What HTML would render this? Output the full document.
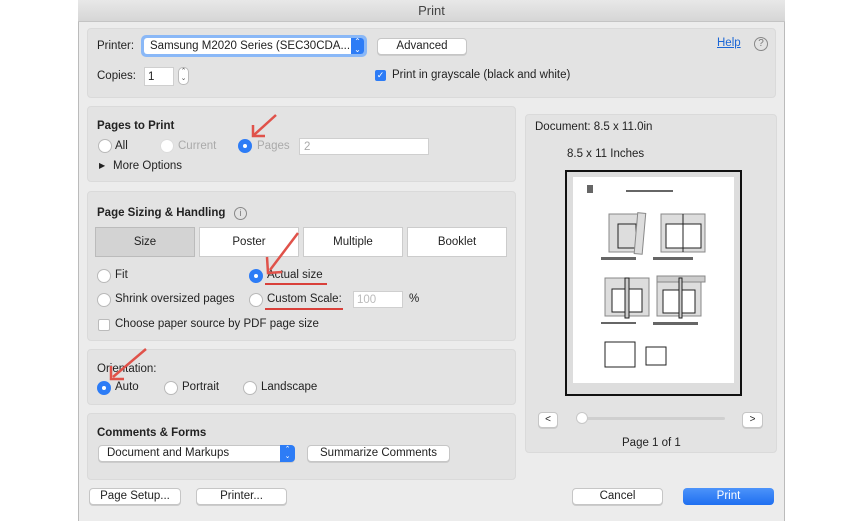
<!DOCTYPE html>
<html><head><meta charset="utf-8"><style>
*{box-sizing:border-box;margin:0;padding:0}
body{width:864px;height:521px;background:#fff;font-family:"Liberation Sans",sans-serif;font-size:11.5px;color:#222;position:relative;overflow:hidden}
.a{position:absolute}
.win{left:78px;top:0;width:707px;height:521px;background:#ececec;border-left:1px solid #bbb;border-right:1px solid #bbb}
.title{left:78px;top:0;width:707px;height:22px;background:linear-gradient(#e8e8e8,#d6d6d6);border-bottom:1px solid #c4c4c4;text-align:center;line-height:22px;font-size:13px;color:#444}
.panel{background:#e3e3e3;border:1px solid #dadada;border-radius:4px}
.btn{background:#fff;border:1px solid #c6c6c6;border-radius:4px;text-align:center;box-shadow:0 1px 0 #ccc;font-size:11.5px}
.rad{width:14px;height:14px;border-radius:50%;background:#fff;border:1px solid #b9b9b9}
.rad.on{background:#2d7cf6;border-color:#2d7cf6}
.rad.on::after{content:"";position:absolute;left:4px;top:4px;width:4px;height:4px;border-radius:50%;background:#fff}
.dis{color:#aaa}
.b{font-weight:bold}
.field{background:#fff;border:1px solid #cfcfcf}
.red{background:#d9403a;height:2px}
</style></head><body>
<div class="a win"></div>
<div class="a title">Print</div>

<div class="a panel" style="left:87px;top:28px;width:689px;height:70px"></div>
<div class="a" style="left:97px;top:40px">Printer:</div>
<div class="a" style="left:141px;top:35px;width:226px;height:22px;border-radius:5px;background:#8ab8f7"></div>
<div class="a" style="left:144px;top:38px;width:220px;height:16px;background:#fff;border-radius:3px;padding-left:6px;line-height:16px;font-size:11.5px">Samsung M2020 Series (SEC30CDA...</div>
<div class="a" style="left:351px;top:38px;width:13px;height:16px;background:#2d7cf6;border-radius:0 3px 3px 0;color:#fff;font-size:8px;text-align:center;line-height:8px">⌃<br>⌄</div>
<div class="a btn" style="left:377px;top:38px;width:90px;height:17px;line-height:15px">Advanced</div>
<div class="a" style="left:717px;top:37px;color:#1a66d6;text-decoration:underline">Help</div>
<div class="a" style="left:754px;top:37px;width:14px;height:14px;border:1px solid #888;border-radius:50%;font-size:10px;text-align:center;line-height:12px;color:#777">?</div>
<div class="a" style="left:97px;top:70px">Copies:</div>
<div class="a field" style="left:144px;top:67px;width:30px;height:19px;padding:3px 3px">1</div>
<div class="a" style="left:178px;top:67px;width:11px;height:18px;border:1px solid #bbb;border-radius:5px;background:#fff;font-size:7px;line-height:7px;text-align:center;color:#555">⌃<br>⌄</div>
<div class="a" style="left:375px;top:70px;width:11px;height:11px;background:#2d7cf6;border-radius:2px;color:#fff;font-size:9px;line-height:11px;text-align:center">✓</div>
<div class="a" style="left:392px;top:69px">Print in grayscale (black and white)</div>

<div class="a panel" style="left:87px;top:106px;width:429px;height:76px"></div>
<div class="a b" style="left:97px;top:120px">Pages to Print</div>
<div class="a rad" style="left:98px;top:139px"></div><div class="a" style="left:115px;top:140px">All</div>
<div class="a rad" style="left:160px;top:139px;border-color:#ddd"></div><div class="a dis" style="left:178px;top:140px">Current</div>
<div class="a rad on" style="left:238px;top:139px"></div><div class="a dis" style="left:257px;top:140px">Pages</div>
<div class="a field" style="left:299px;top:138px;width:130px;height:17px;padding:2px 4px;color:#aaa">2</div>
<div class="a" style="left:99px;top:161px;font-size:8px">▶</div><div class="a" style="left:113px;top:160px">More Options</div>
<svg class="a" style="left:248px;top:112px" width="32" height="28"><path d="M28 3 L6 23 M5 13 L5 24 L17 24" stroke="#e0524a" stroke-width="2.5" fill="none"/></svg>

<div class="a panel" style="left:87px;top:191px;width:429px;height:150px"></div>
<div class="a b" style="left:97px;top:207px">Page Sizing &amp; Handling</div>
<div class="a" style="left:234px;top:207px;width:13px;height:13px;border:1px solid #888;border-radius:50%;font-size:9px;text-align:center;line-height:11px;color:#777">i</div>
<div class="a" style="left:95px;top:227px;width:100px;height:30px;background:#d3d3d3;border:1px solid #bbb;text-align:center;line-height:28px">Size</div>
<div class="a" style="left:199px;top:227px;width:100px;height:30px;background:#fff;border:1px solid #ccc;text-align:center;line-height:28px">Poster</div>
<div class="a" style="left:303px;top:227px;width:100px;height:30px;background:#fff;border:1px solid #ccc;text-align:center;line-height:28px">Multiple</div>
<div class="a" style="left:407px;top:227px;width:100px;height:30px;background:#fff;border:1px solid #ccc;text-align:center;line-height:28px">Booklet</div>
<div class="a rad" style="left:97px;top:269px"></div><div class="a" style="left:115px;top:269px">Fit</div>
<div class="a rad on" style="left:249px;top:269px"></div><div class="a" style="left:267px;top:269px">Actual size</div>
<div class="a red" style="left:265px;top:283px;width:62px"></div>
<div class="a rad" style="left:97px;top:293px"></div><div class="a" style="left:115px;top:293px">Shrink oversized pages</div>
<div class="a rad" style="left:249px;top:293px"></div><div class="a" style="left:267px;top:293px">Custom Scale:</div>
<div class="a red" style="left:265px;top:308px;width:78px"></div>
<div class="a field" style="left:353px;top:291px;width:50px;height:17px;padding:2px 3px;color:#bbb">100</div>
<div class="a" style="left:409px;top:293px">%</div>
<div class="a" style="left:98px;top:319px;width:12px;height:12px;background:#fff;border:1px solid #bbb;border-radius:2px"></div>
<div class="a" style="left:115px;top:318px">Choose paper source by PDF page size</div>
<svg class="a" style="left:262px;top:230px" width="40" height="50"><path d="M36 3 L8 40 M5 27 L6 43 L20 42" stroke="#e0524a" stroke-width="2.5" fill="none"/></svg>

<div class="a panel" style="left:87px;top:349px;width:429px;height:56px"></div>
<div class="a" style="left:97px;top:363px">Orientation:</div>
<div class="a rad on" style="left:97px;top:381px"></div><div class="a" style="left:115px;top:381px">Auto</div>
<div class="a rad" style="left:164px;top:381px"></div><div class="a" style="left:182px;top:381px">Portrait</div>
<div class="a rad" style="left:243px;top:381px"></div><div class="a" style="left:261px;top:381px">Landscape</div>
<svg class="a" style="left:108px;top:346px" width="42" height="36"><path d="M38 3 L5 31 M3 20 L3 33 L16 33" stroke="#e0524a" stroke-width="2.5" fill="none"/></svg>

<div class="a panel" style="left:87px;top:413px;width:429px;height:67px"></div>
<div class="a b" style="left:97px;top:427px">Comments &amp; Forms</div>
<div class="a btn" style="left:98px;top:445px;width:197px;height:17px;text-align:left;padding-left:8px;line-height:15px">Document and Markups</div>
<div class="a" style="left:280px;top:445px;width:15px;height:17px;background:#2d7cf6;border-radius:0 4px 4px 0;color:#fff;font-size:7px;line-height:7px;text-align:center;padding-top:1px">⌃<br>⌄</div>
<div class="a btn" style="left:307px;top:445px;width:143px;height:17px;line-height:15px">Summarize Comments</div>

<div class="a btn" style="left:89px;top:488px;width:92px;height:17px;line-height:15px">Page Setup...</div>
<div class="a btn" style="left:196px;top:488px;width:91px;height:17px;line-height:15px">Printer...</div>
<div class="a btn" style="left:572px;top:488px;width:91px;height:17px;line-height:15px">Cancel</div>
<div class="a" style="left:683px;top:488px;width:91px;height:17px;line-height:17px;background:linear-gradient(#4c93fa,#1f6ff0);border-radius:4px;color:#fff;text-align:center">Print</div>

<div class="a panel" style="left:525px;top:114px;width:252px;height:339px"></div>
<div class="a" style="left:535px;top:121px">Document: 8.5 x 11.0in</div>
<div class="a" style="left:567px;top:148px">8.5 x 11 Inches</div>
<div class="a" style="left:565px;top:170px;width:177px;height:226px;border:2px solid #111;background:#ddd"></div>
<div class="a" style="left:573px;top:177px;width:161px;height:206px;background:#fff"></div>
<svg class="a" style="left:573px;top:177px" width="161" height="206">
<g fill="none" stroke="#222" stroke-width="1">
<rect x="36" y="37" width="33" height="38" fill="#ddd" stroke="#888"/><rect x="45" y="47" width="18" height="24"/>
<rect x="63" y="36" width="8" height="41" fill="#ddd" stroke="#888" transform="rotate(5 67 56)"/>
<rect x="88" y="37" width="44" height="38" fill="#ddd" stroke="#888"/><rect x="93" y="47" width="35" height="24" fill="#fff"/><line x1="110" y1="37" x2="110" y2="75"/>
<rect x="32" y="101" width="44" height="38" fill="#ddd" stroke="#888"/><rect x="39" y="112" width="30" height="23" fill="#fff"/><rect x="52" y="101" width="4" height="40" fill="#ccc"/>
<rect x="84" y="101" width="44" height="38" fill="#ddd" stroke="#888"/><rect x="90" y="113" width="32" height="23" fill="#fff"/><rect x="84" y="99" width="48" height="6" fill="#ccc" stroke="#888"/><rect x="106" y="101" width="3" height="40" fill="#ccc"/>
<rect x="32" y="165" width="30" height="25" fill="#fff"/><rect x="73" y="170" width="20" height="18" fill="#fff"/>
</g>
<g fill="#666"><rect x="53" y="13" width="47" height="2"/><rect x="28" y="80" width="35" height="3"/><rect x="80" y="80" width="40" height="3"/><rect x="28" y="145" width="35" height="2"/><rect x="80" y="145" width="45" height="3"/><rect x="14" y="8" width="6" height="8"/></g>
</svg>
<div class="a btn" style="left:538px;top:412px;width:20px;height:16px;line-height:14px;font-size:10px">&lt;</div>
<div class="a btn" style="left:742px;top:412px;width:21px;height:16px;line-height:14px;font-size:10px">&gt;</div>
<div class="a" style="left:580px;top:417px;width:145px;height:3px;background:#cfcfcf;border-radius:2px"></div>
<div class="a" style="left:576px;top:412px;width:12px;height:12px;border-radius:50%;background:#fff;border:1px solid #c8c8c8"></div>
<div class="a" style="left:622px;top:437px">Page 1 of 1</div>
</body></html>
